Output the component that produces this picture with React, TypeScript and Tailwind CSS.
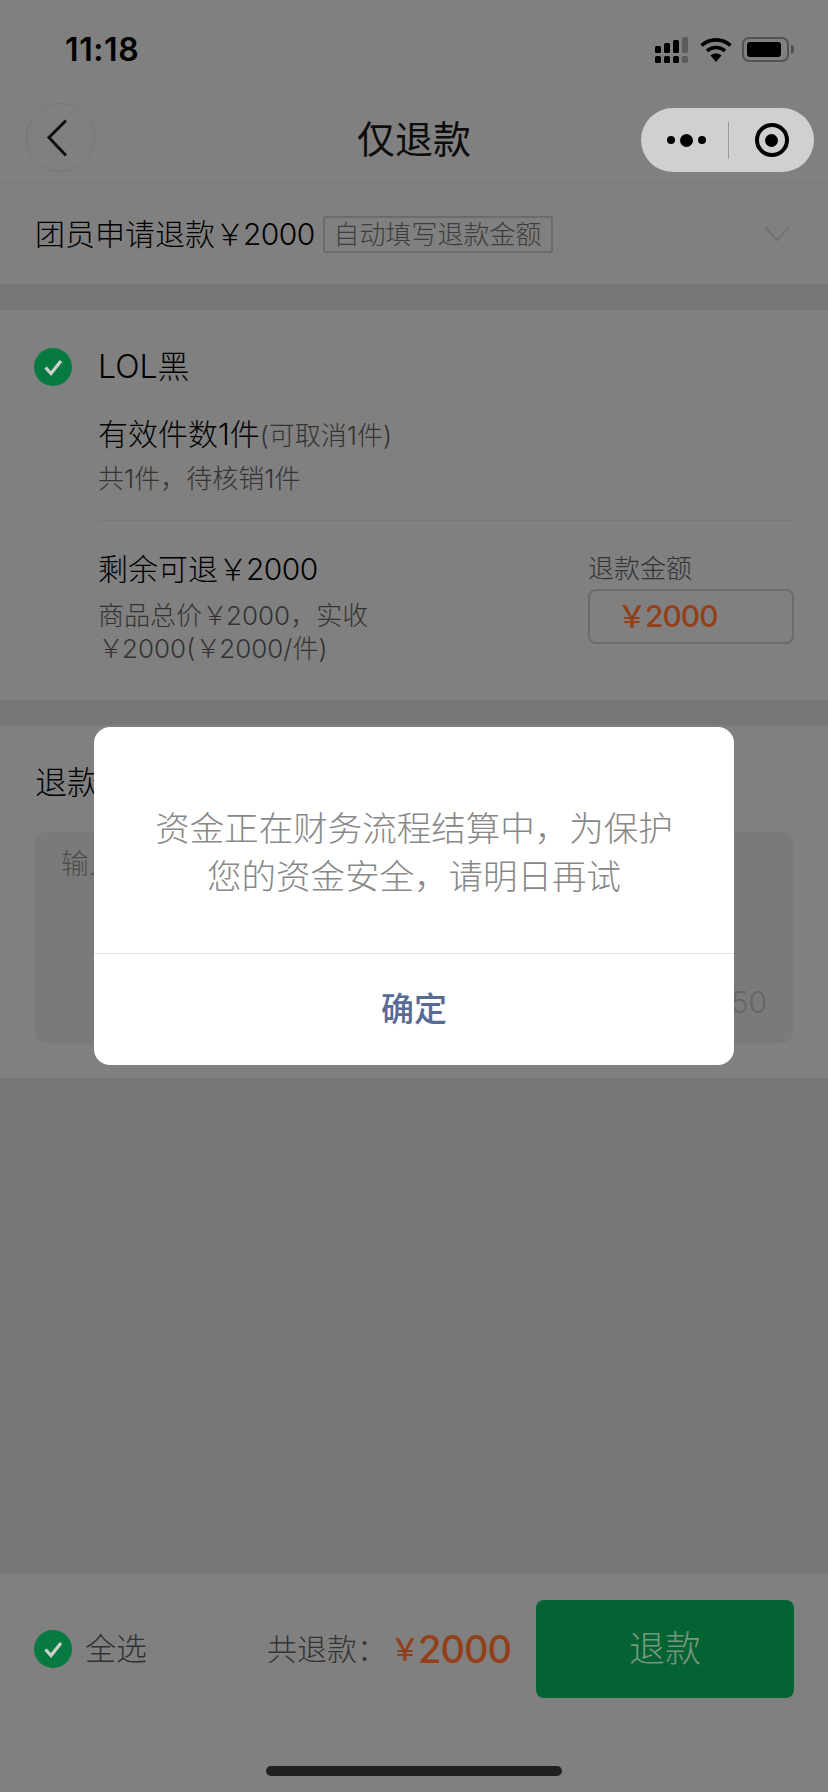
import React from 'react';

const Yen: React.FC = () => <span className="tracking-[-2px]">￥</span>;

const CheckCircle: React.FC = () => (
  <svg width="38" height="38" viewBox="0 0 38 38" className="shrink-0">
    <circle cx="19" cy="19" r="19" fill="#077a41" />
    <path d="M11.5 19.5l5.5 6 10-12.5" fill="none" stroke="#cfcfcf" strokeWidth="3.3" />
  </svg>
);

const SignalIcon: React.FC = () => (
  <svg width="33" height="26" viewBox="0 0 33 26">
    <rect x="0" y="9" width="6" height="7" rx="1.5" fill="#000" />
    <rect x="9" y="6" width="6" height="10" rx="1.5" fill="#000" />
    <rect x="18" y="3" width="6" height="13" rx="1.5" fill="#000" />
    <rect x="27" y="0" width="6" height="16" rx="1.5" fill="#5c5c5c" />
    <rect x="0" y="19" width="6" height="7" rx="1.5" fill="#000" />
    <rect x="9" y="19" width="6" height="7" rx="1.5" fill="#000" />
    <rect x="18" y="19" width="6" height="7" rx="1.5" fill="#000" />
    <rect x="27" y="19" width="6" height="7" rx="1.5" fill="#5c5c5c" />
  </svg>
);

const WifiIcon: React.FC = () => (
  <svg width="32" height="25" viewBox="0 0 32 25">
    <path d="M1.5 8.5C9.5 1 22.5 1 30.5 8.5" fill="none" stroke="#000" strokeWidth="3.6" />
    <path d="M7 14c5-4.6 13-4.6 18 0" fill="none" stroke="#000" strokeWidth="3.6" />
    <path d="M10.5 18.5c3-2.6 8-2.6 11 0L16 25z" fill="#000" />
  </svg>
);

const BatteryIcon: React.FC = () => (
  <div className="flex items-center gap-[2px]">
    <div className="w-[47px] h-[25px] rounded-[7px] border-2 border-[#525252] p-[3px]">
      <div className="w-[34px] h-full rounded-[3px] bg-black" />
    </div>
    <div className="w-[3px] h-[9px] rounded-r-full bg-[#525252]" />
  </div>
);

const StatusBar: React.FC = () => (
  <div className="h-[100px] flex justify-between pl-[65px] pr-[34px] pt-[37px]">
    <span className="text-[32px] leading-[26px] font-semibold text-black tracking-[0.6px]">11:18</span>
    <div className="flex items-start gap-[10px]">
      <SignalIcon />
      <div className="ml-[2px]">
        <WifiIcon />
      </div>
      <BatteryIcon />
    </div>
  </div>
);

const NavBar: React.FC = () => (
  <div className="relative h-[84px] border-b border-[#7a7a7a] pl-[26px] pt-[3px]">
    <div className="w-[69px] h-[69px] rounded-full border border-[#777777] flex items-center justify-center">
      <svg width="24" height="38" viewBox="0 0 24 38" className="mr-[5px]">
        <path d="M20 1.5L3 18.5 20 36.5" fill="none" stroke="#111" strokeWidth="3" />
      </svg>
    </div>
    <div className="absolute left-0 right-0 top-[16px] text-center text-[38px] leading-[46px] text-[#0d0d0d]">
      仅退款
    </div>
    {/* capsule sits over the dim layer */}
    <div className="absolute left-[641px] top-[8px] w-[173px] h-[64px] rounded-full bg-[#d0d0d0] flex items-center">
      <div className="w-[87px] flex items-center justify-center gap-[5px] pl-[4px]">
        <span className="w-[8px] h-[8px] rounded-full bg-black" />
        <span className="w-[13px] h-[13px] rounded-full bg-black" />
        <span className="w-[8px] h-[8px] rounded-full bg-black" />
      </div>
      <div className="w-px h-[37px] bg-[#9a9a9a]" />
      <div className="flex-1 flex justify-center">
        <div className="w-[34px] h-[34px] rounded-full border-[4px] border-black flex items-center justify-center">
          <span className="w-[13px] h-[13px] rounded-full bg-black" />
        </div>
      </div>
    </div>
  </div>
);

const ApplyRow: React.FC = () => (
  <div className="h-[100px] flex items-center pl-[35px] pr-[38px] bg-[#808080]">
    <span className="text-[30px] text-black font-light">
      团员申请退款
      <Yen />
      <span className="tracking-[-0.6px]">2000</span>
    </span>
    <span className="ml-[8px] h-[37px] px-[9px] flex items-center text-[26px] text-[#3d3d3d] border-2 border-[#6b6b6b] rounded-[3px] font-light">
      自动填写退款金额
    </span>
    <svg width="26" height="16" viewBox="0 0 26 16" className="ml-auto">
      <path d="M1.5 1.5L13 14 24.5 1.5" fill="none" stroke="#707070" strokeWidth="2" />
    </svg>
  </div>
);

const ItemCard: React.FC = () => (
  <div className="mt-[26px] h-[390px] bg-[#808080] pl-[34px] pr-[34px] pt-[38px]">
    <div className="flex items-center gap-[26px]">
      <CheckCircle />
      <span className="text-[32px] leading-[38px] text-black font-light">LOL黑</span>
    </div>
    <div className="ml-[64px]">
      <div className="mt-[28px] text-[30px] leading-[40px] text-black font-light">
        有效件数1件<span className="text-[26px] text-[#333]">(可取消1件)</span>
      </div>
      <div className="mt-[5px] text-[26px] leading-[36px] text-[#333] font-light">共1件，待核销1件</div>
      <div className="mt-[23px] h-px bg-[#787878]" />
      <div className="mt-[28px] flex justify-between">
        <div className="w-[290px]">
          <div className="text-[30px] leading-[40px] text-black font-light">
            剩余可退
            <Yen />
            <span className="tracking-[-0.6px]">2000</span>
          </div>
          <div className="mt-[10px] text-[26px] leading-[33px] text-[#333] font-light">
            商品总价
            <Yen />
            2000，实收
            <br />
            <Yen />
            2000(
            <Yen />
            2000/件)
          </div>
        </div>
        <div className="w-[206px]">
          <div className="mt-[1px] text-[26px] leading-[38px] text-[#333] font-light">退款金额</div>
          <div className="mt-[1px] h-[55px] rounded-[8px] border-2 border-[#6b6b6b] pl-[27px] flex items-center text-[30px] font-medium text-[#93401a]">
            <span>
              <Yen />
              <span className="tracking-[-1px]">2000</span>
            </span>
          </div>
        </div>
      </div>
    </div>
  </div>
);

const ReasonCard: React.FC = () => (
  <div className="mt-[25px] h-[353px] bg-[#808080] px-[35px] pt-[38px]">
    <div className="text-[32px] leading-[40px] text-black font-light">退款说明</div>
    <div className="mt-[29px] h-[211px] rounded-[12px] bg-[#7a7a7a] pl-[26px] pr-[26px] pt-[14px] flex flex-col">
      <div className="text-[28px] leading-[36px] text-[#4d4d4d] font-light">输入退款说明</div>
      <div className="mt-auto mb-[22px] text-right text-[30px] leading-[38px] text-[#666666] font-light">0/150</div>
    </div>
  </div>
);

const BottomBar: React.FC = () => (
  <div className="relative h-[219px] bg-[#808080] pl-[34px] pr-[34px] pt-[27px]">
    <div className="flex items-start">
      <div className="flex items-center gap-[13px] h-[98px]">
        <CheckCircle />
        <span className="text-[31px] text-[#333] font-light">全选</span>
      </div>
      <div className="ml-auto flex items-center h-[98px] mr-[25px]">
        <span className="text-[30px] text-[#333] font-light mr-[3px]">共退款：</span>
        <span className="text-[30px] font-medium text-[#93401a]">
          <Yen />
        </span>
        <span className="text-[38px] font-medium text-[#93401a] tracking-[-1px]">2000</span>
      </div>
      <div className="w-[258px] h-[98px] rounded-[8px] bg-[#056333] flex items-center justify-center text-[36px] text-[#78977f] font-light">
        退款
      </div>
    </div>
    <div className="absolute left-[266px] top-[193px] w-[296px] h-[10px] rounded-full bg-[#202020]" />
  </div>
);

const Dialog: React.FC = () => (
  <div className="absolute left-[94px] top-[727px] w-[640px] h-[338px] rounded-[16px] bg-white flex flex-col">
    <div className="h-[226px] flex items-center justify-center px-[55px] pt-[26px] text-center text-[34.5px] leading-[48px] text-[#888888] font-light">
      资金正在财务流程结算中，为保护您的资金安全，请明日再试
    </div>
    <div className="h-px bg-[#e2e2e2]" />
    <div className="flex-1 flex items-center justify-center text-[33px] font-medium text-[#576b95]">确定</div>
  </div>
);

export default function App() {
  return (
    <div className="relative w-[828px] h-[1792px] overflow-hidden bg-[#777777] flex flex-col font-['Inter','Noto_Sans_CJK_SC',sans-serif]">
      <div className="bg-[#808080]">
        <StatusBar />
        <NavBar />
      </div>
      <ApplyRow />
      <ItemCard />
      <ReasonCard />
      <div className="flex-1" />
      <BottomBar />
      <Dialog />
    </div>
  );
}
